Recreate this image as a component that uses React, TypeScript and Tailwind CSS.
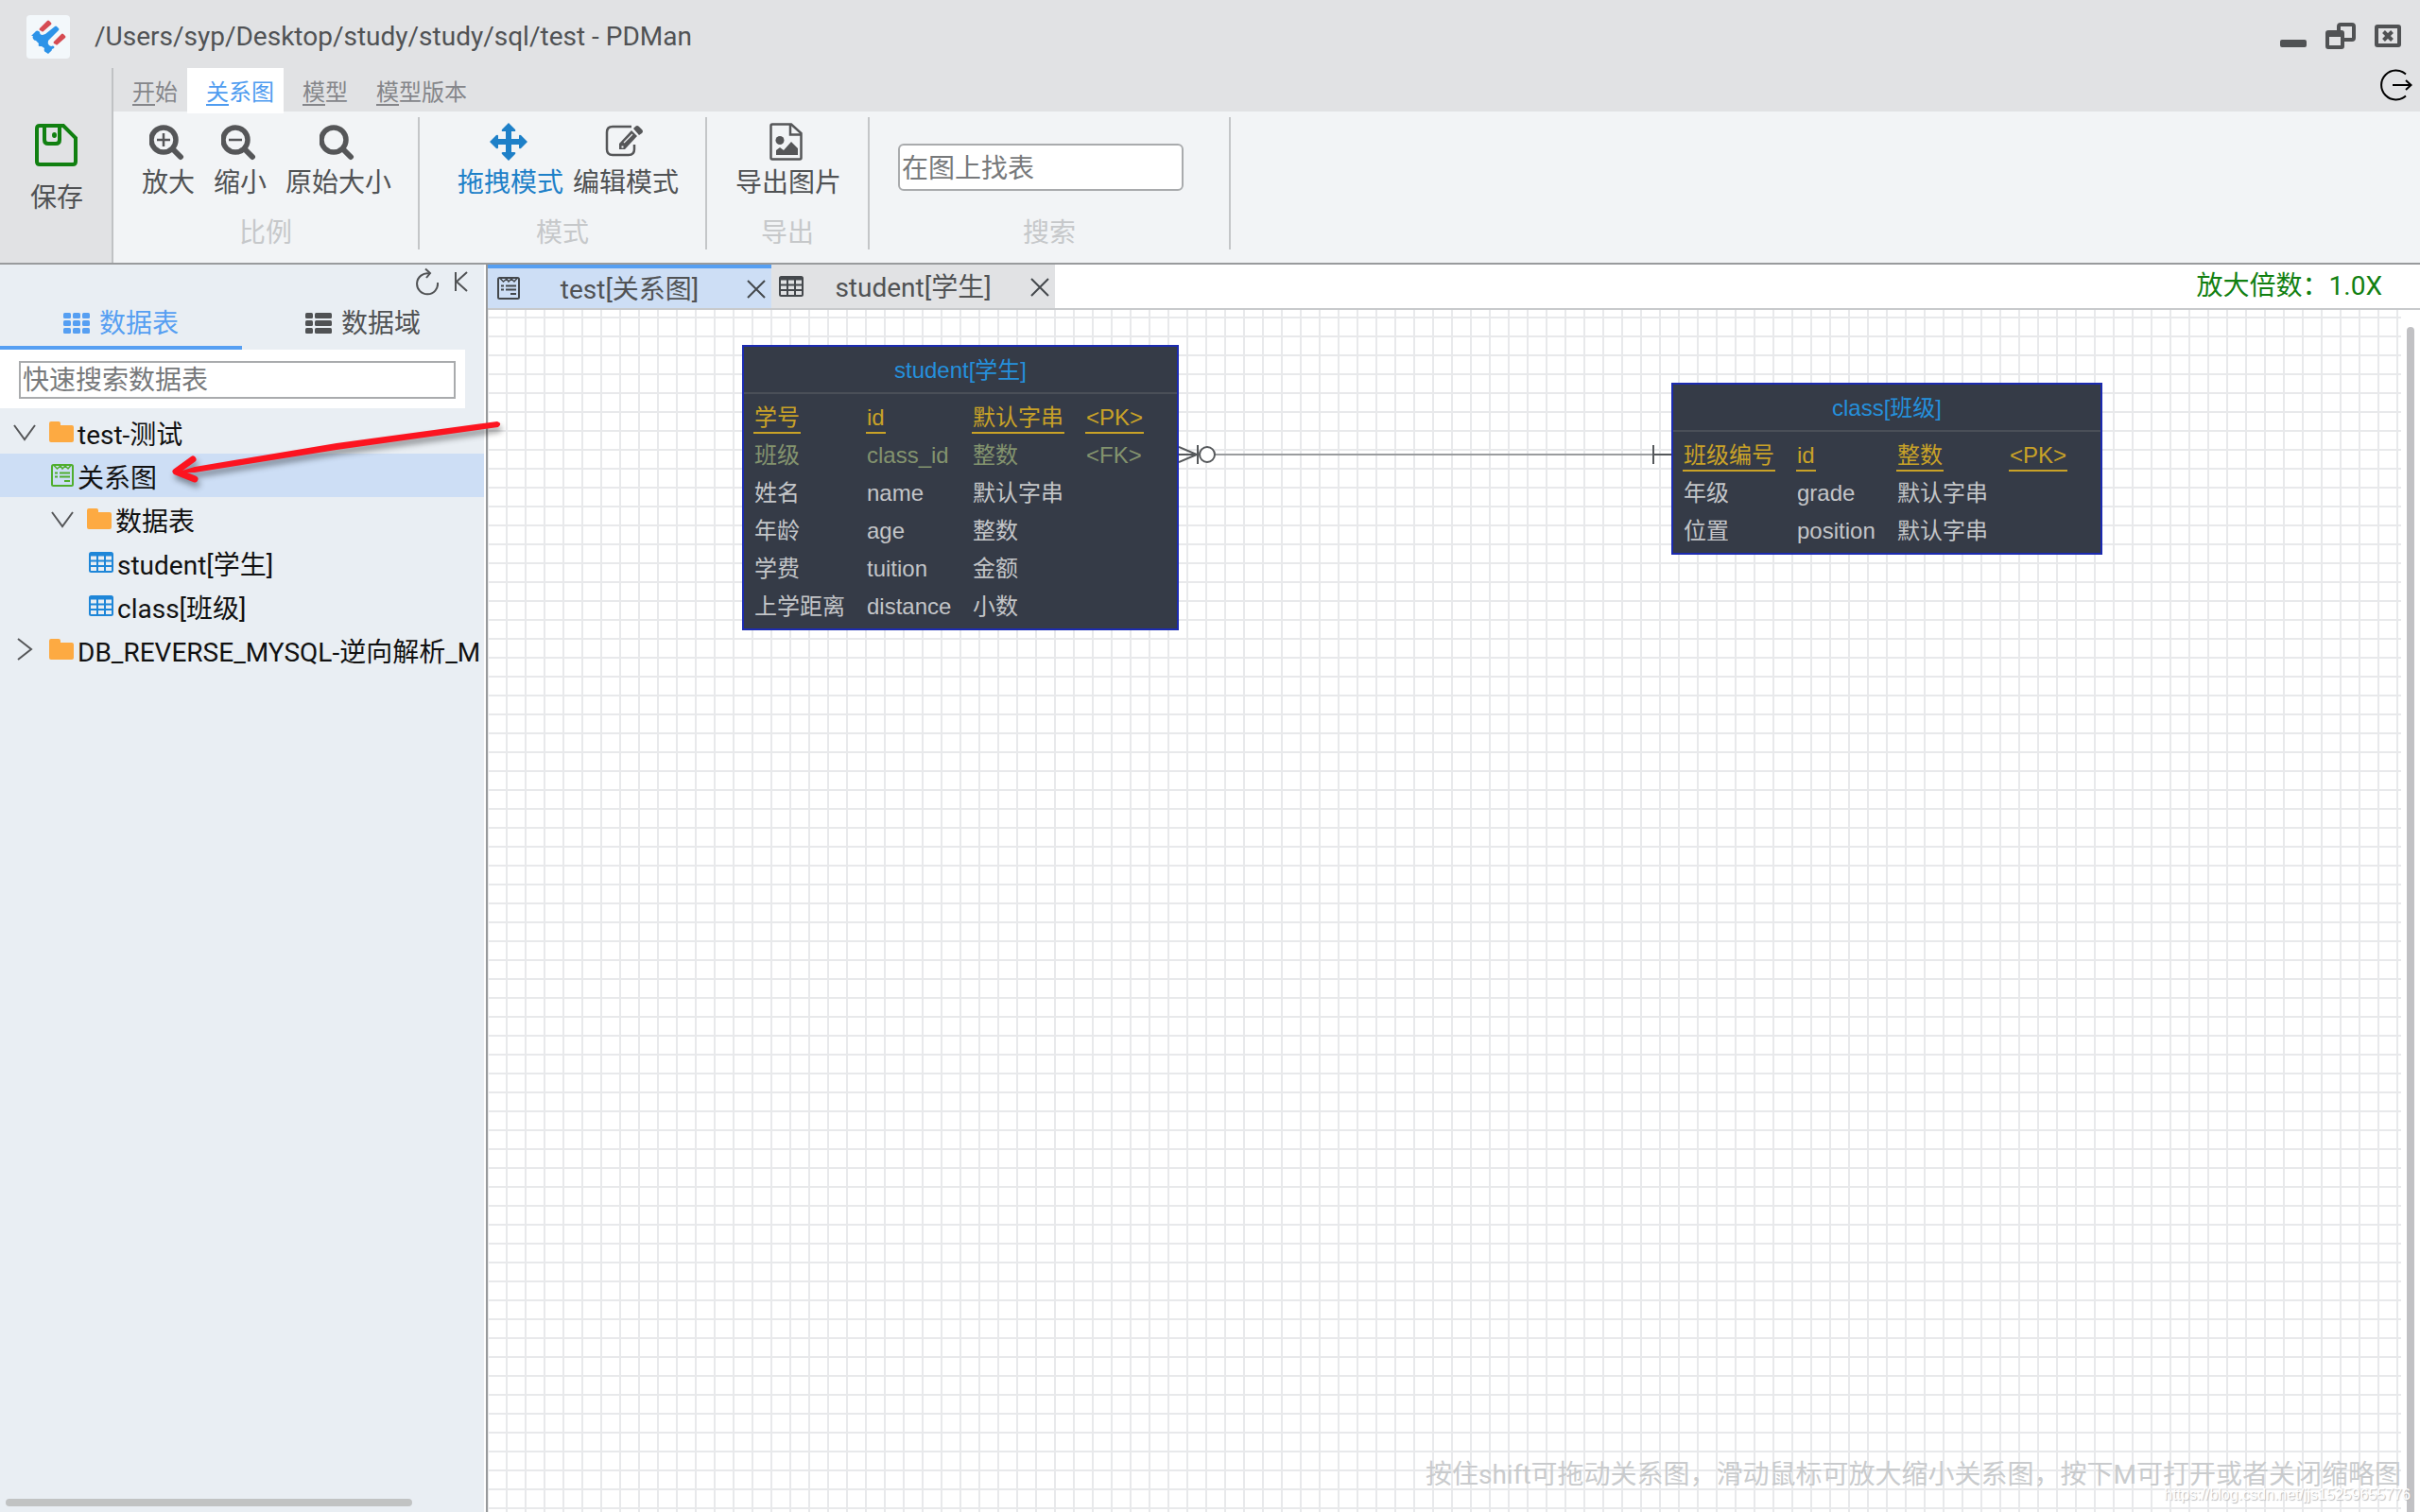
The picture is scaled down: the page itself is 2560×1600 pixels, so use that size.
import React from 'react';

type Cell = string;
type Row = { kind: 'pk' | 'fk' | 'plain'; cells: Cell[] };

const studentRows: Row[] = [
  { kind: 'pk', cells: ['学号', 'id', '默认字串', '<PK>'] },
  { kind: 'fk', cells: ['班级', 'class_id', '整数', '<FK>'] },
  { kind: 'plain', cells: ['姓名', 'name', '默认字串', ''] },
  { kind: 'plain', cells: ['年龄', 'age', '整数', ''] },
  { kind: 'plain', cells: ['学费', 'tuition', '金额', ''] },
  { kind: 'plain', cells: ['上学距离', 'distance', '小数', ''] },
];

const classRows: Row[] = [
  { kind: 'pk', cells: ['班级编号', 'id', '整数', '<PK>'] },
  { kind: 'plain', cells: ['年级', 'grade', '默认字串', ''] },
  { kind: 'plain', cells: ['位置', 'position', '默认字串', ''] },
];

const rowColor = {
  pk: 'text-[#c9a227]',
  fk: 'text-[#83936e]',
  plain: 'text-[#c3c5c8]',
};

function Logo() {
  return (
    <svg viewBox="0 0 46 46" className="h-[46px] w-[46px] shrink-0" aria-hidden="true">
      <rect width="46" height="46" rx="4" fill="#f3f8fb" />
      <path d="M14 14l8-8q1-1 2 0l2 2q1 1 0 2l-8 7q-1 1-2 0l-2-1q-1-1 0-2z" fill="#d64b52" />
      <path d="M29 28l8-8q1-1 2 0l2 2q1 1 0 2l-8 7q-1 1-2 0l-2-1q-1-1 0-2z" fill="#d64b52" />
      <path
        d="M5 22l5-5q1-1 3 0l1 1q0 3 3 3l3-1 10-8q1-1 2 0l2 2q1 1 0 2L23 27q-1 3 1 5l2 1q2-1 3 0 1 1 0 2l-2 1q0 2-2 3l-2 2-3-2q-2-1-1-4l-3-2h-2q-2 0-1-3l-3-3q-2 0-3-2-1-2 0-3z"
        fill="#2d93e8"
      />
    </svg>
  );
}

function SaveIcon() {
  return (
    <svg viewBox="0 0 46 46" className="ml-0.5 h-[46px] w-[46px]" fill="none" stroke="#118011" strokeWidth="4" aria-hidden="true">
      <path d="M5 3h25l13 13v25q0 3-3 3H5q-3 0-3-3V6q0-3 3-3z" />
      <path d="M10 3v15q0 4 4 4h8q4 0 4-4V3" />
      <ellipse cx="20.500" cy="13" rx="2.500" ry="3" fill="#118011" stroke="none" />
    </svg>
  );
}

function SearchIcon({ sign }: { sign?: 'plus' | 'minus' }) {
  return (
    <svg viewBox="0 0 40 40" className="h-10 w-10" fill="none" stroke="#555658" aria-hidden="true">
      <circle cx="15" cy="18" r="13" strokeWidth="5.500" />
      <path d="M25 28l8 8" strokeWidth="6" strokeLinecap="round" />
      {sign && <path d="M8 18h14" strokeWidth="2.500" />}
      {sign === 'plus' && <path d="M15 11v14" strokeWidth="2.500" />}
    </svg>
  );
}

function MoveIcon() {
  return (
    <svg viewBox="0 0 40 40" className="mr-1 h-10 w-10" fill="#1e80c8" aria-hidden="true">
      <path d="M20 0l7 7q1 2-1 2h-3v8h8v-3q0-2 2-1l7 7-7 7q-2 1-2-1v-3h-8v8h3q2 0 1 2l-7 7-7-7q-1-2 1-2h3v-8H9v3q0 2-2 1l-7-7 7-7q2-1 2 1v3h8V9h-3q-2 0-1-2z" />
    </svg>
  );
}

function EditIcon() {
  return (
    <svg viewBox="0 0 40 40" className="mr-1 h-10 w-10" aria-hidden="true">
      <path d="M28 4H8Q2 4 2 10v18q0 6 6 6h17q6 0 6-6v-5" fill="none" stroke="#555658" strokeWidth="2.500" />
      <path d="M28 8l6 6-13 14h-6v-6z" fill="#555658" />
      <path d="M30 6l2-2q2-2 4 0l3 3q2 2 0 4l-3 2z" fill="#555658" />
      <path d="M20 21l9-9" stroke="#f2f4f5" strokeWidth="1.200" />
      <path d="M17.500 22.500v2h2v2h-2z" fill="#f2f4f5" />
    </svg>
  );
}

function FileImageIcon() {
  return (
    <svg viewBox="0 0 40 40" className="mr-1 h-10 w-10" aria-hidden="true">
      <path d="M5 1.500h20L35.500 11v26q0 1.500-1.500 1.500H5q-1.500 0-1.500-1.500V3q0-1.500 1.500-1.500z" fill="none" stroke="#555658" strokeWidth="2.500" />
      <path d="M24 2v10.500h11" fill="none" stroke="#555658" strokeWidth="2.500" />
      <circle cx="13" cy="18.500" r="4.500" fill="#555658" />
      <path d="M9 34v-5l4-3 4 3 8-9 7 7v7z" fill="#555658" />
    </svg>
  );
}

function DiagramIcon({ color }: { color: string }) {
  return (
    <svg viewBox="0 0 24 24" className="h-6 w-6 shrink-0" fill="none" stroke={color} strokeWidth="2" aria-hidden="true">
      <rect x="1" y="1" width="22" height="22" rx="1.500" />
      <path d="M3 1.500l3.500 3.500L10 2l2 3 3-3 3 3 3-3.500" strokeWidth="1.500" />
      <path d="M4 9.500h3M9 9.500h11M4 13.500h3M9 13.500h11M14 18h6" />
    </svg>
  );
}

function TableIcon({ color }: { color: string }) {
  return (
    <svg viewBox="0 0 26 22" className="h-[22px] w-[26px] shrink-0" fill="none" stroke={color} strokeWidth="2" aria-hidden="true">
      <rect x="1" y="1" width="24" height="20" rx="1.500" />
      <path d="M1 3h24" strokeWidth="3" />
      <path d="M1 9.500h24M1 15h24M9 3v18M17 3v18" />
    </svg>
  );
}

function FolderIcon() {
  return (
    <svg viewBox="0 0 26 22" className="h-[22px] w-[26px] shrink-0" fill="#fdaa42" aria-hidden="true">
      <path d="M2 0h8q2 0 2 2v2h12q2 0 2 2v14q0 2-2 2H2q-2 0-2-2V2q0-2 2-2z" />
    </svg>
  );
}

function Chevron({ open }: { open: boolean }) {
  return (
    <svg viewBox="0 0 24 24" className="h-6 w-6 shrink-0" fill="none" stroke="#555658" strokeWidth="2" aria-hidden="true">
      {open ? <path d="M1 5l11 15L23 5" /> : <path d="M5 1l14 11L5 23" />}
    </svg>
  );
}

function CloseX() {
  return (
    <svg viewBox="0 0 20 20" className="mt-0.5 h-5 w-5" stroke="#44484c" strokeWidth="2" aria-hidden="true">
      <path d="M1 1l18 18M19 1L1 19" />
    </svg>
  );
}

function MenuTab({ first, rest, active }: { first: string; rest: string; active?: boolean }) {
  return (
    <button
      className={
        active
          ? 'relative z-10 -mb-0.5 bg-white pt-1 pr-2.5 pl-5 text-[#4f9cf0]'
          : 'pt-1.5 pr-2.5 pl-5 text-[#85868a]'
      }
    >
      <span className="underline decoration-2 underline-offset-4">{first}</span>
      {rest}
    </button>
  );
}

function Tool({ icon, label, active }: { icon: React.ReactNode; label: string; active?: boolean }) {
  return (
    <button className={active ? 'flex flex-col items-center text-[#1e80c8]' : 'flex flex-col items-center'}>
      {icon}
      <span className="leading-[48px]">{label}</span>
    </button>
  );
}

function Group({ label, className, children }: { label: string; className: string; children: React.ReactNode }) {
  return (
    <section className="flex h-[140px] flex-col border-r-2 border-[#c4c6c8]">
      <div className={`flex h-[100px] shrink-0 pt-1.5 ${className}`}>{children}</div>
      <div className="text-center leading-[46px] text-[#c6c8ca]">{label}</div>
    </section>
  );
}

function TreeRow({
  indent,
  selected,
  label,
  children,
}: {
  indent: string;
  selected?: boolean;
  label: string;
  children: React.ReactNode;
}) {
  return (
    <li
      className={`flex h-[46px] items-center overflow-hidden whitespace-nowrap text-[#111] ${indent} ${
        selected ? 'bg-[#cddef5]' : ''
      }`}
    >
      {children}
      <span className="ml-1 pt-2">{label}</span>
    </li>
  );
}

function Entity({ title, rows, widths, className }: { title: string; rows: Row[]; widths: string[]; className: string }) {
  return (
    <div
      className={`absolute border-2 border-[#1c2bb0] bg-[#353b47] pb-[3px] font-['Liberation_Sans','Noto_Sans_CJK_SC',sans-serif] text-2xl ${className}`}
    >
      <h2 className="h-[50px] border-b-2 border-[#4a4f58] text-center leading-[50px] text-[#2590dc]">{title}</h2>
      <table className="mt-[5px] ml-2.5 table-fixed border-collapse whitespace-nowrap">
        <tbody>
          {rows.map((r) => (
            <tr key={r.cells[1]} className={`h-10 ${rowColor[r.kind]}`}>
              {r.cells.map((c, i) => (
                <td key={i} className={`p-0 align-top ${widths[i]}`}>
                  {c && (
                    <span
                      className={
                        r.kind === 'pk'
                          ? 'inline-block h-[37px] border-b-2 border-[#c9a227] px-px leading-10'
                          : 'inline-block px-px leading-10'
                      }
                    >
                      {c}
                    </span>
                  )}
                </td>
              ))}
            </tr>
          ))}
        </tbody>
      </table>
    </div>
  );
}

function Relation() {
  return (
    <svg viewBox="0 0 521 24" className="absolute top-[141px] left-[731px] h-6 w-[521px]" fill="none" stroke="#55585b" strokeWidth="2" aria-hidden="true">
      <path d="M38 12h465" stroke="#9a9c9e" />
      <path d="M0 4l19 8L0 20M0 12h19" />
      <path d="M20 2v20" />
      <circle cx="30" cy="12" r="8" fill="#fff" />
      <path d="M502 2v20M502 12h19" />
    </svg>
  );
}

function Pointer() {
  return (
    <svg
      viewBox="0 0 360 80"
      className="pointer-events-none absolute top-[440px] left-[176px] z-20 h-20 w-[360px] drop-shadow-[2px_5px_3px_rgba(0,0,0,0.4)]"
      aria-hidden="true"
    >
      <path d="M10 60L30 60L180 36L351 12Q356 8 350 6L180 29L30 54z" fill="#fc1420" />
      <path d="M28 46L10 59L30 67" fill="none" stroke="#fc1420" strokeWidth="7" strokeLinecap="round" strokeLinejoin="round" />
    </svg>
  );
}

export default function App() {
  return (
    <div className="relative flex min-h-screen flex-col bg-white font-['Roboto','Noto_Sans_CJK_SC',sans-serif] text-[28px] text-[#505254]">
      <header className="flex h-[72px] items-center bg-[#e1e2e4] pt-1.5 pr-5 pl-7">
        <Logo />
        <h1 className="ml-[26px] flex-1">/Users/syp/Desktop/study/study/sql/test - PDMan</h1>
        <div className="flex items-center gap-5">
          <button aria-label="最小化">
            <svg viewBox="0 0 28 32" className="h-8 w-7" fill="#505254" aria-hidden="true">
              <rect y="19" width="28" height="8" rx="2" />
            </svg>
          </button>
          <button aria-label="还原">
            <svg viewBox="0 0 32 32" className="h-8 w-8" fill="none" stroke="#505254" strokeWidth="4" aria-hidden="true">
              <path d="M14 9V5q0-2 2-2h12q2 0 2 2v12q0 2-2 2h-8" />
              <rect x="2" y="11" width="16" height="16" rx="1" />
              <path d="M2 14h16" />
            </svg>
          </button>
          <button aria-label="关闭">
            <svg viewBox="0 0 28 32" className="h-8 w-7" fill="none" stroke="#505254" strokeWidth="4" aria-hidden="true">
              <rect x="2" y="5" width="24" height="20" rx="1" />
              <path d="M9.500 10.500l9 9M18.500 10.500l-9 9" />
            </svg>
          </button>
        </div>
      </header>

      <div className="flex border-b-2 border-[#999b9d] bg-[#e1e2e4]">
        <button className="flex h-[206px] w-[120px] flex-col items-center border-r-2 border-[#c0c2c4] pt-[58px]">
          <SaveIcon />
          <span className="mt-3 ml-0.5 leading-[44px]">保存</span>
        </button>
        <div className="flex flex-1 flex-col">
          <nav className="flex h-[46px] text-2xl">
            <MenuTab first="开" rest="始" />
            <MenuTab first="关" rest="系图" active />
            <MenuTab first="模" rest="型" />
            <MenuTab first="模" rest="型版本" />
            <button aria-label="退出" className="mr-2 ml-auto flex items-start">
              <svg viewBox="0 0 34 34" className="mt-px h-[34px] w-[34px]" fill="none" stroke="#000" strokeWidth="2" aria-hidden="true">
                <path d="M27 5.500A15.500 15.500 0 1 0 27 28.500" />
                <path d="M13 17h19M27 12l5.500 5-5.500 5" />
              </svg>
            </button>
          </nav>
          <div className="flex flex-1 bg-[#f2f4f6] pt-1.5">
            <Group label="比例" className="gap-5 px-7.5 pr-7">
              <Tool icon={<SearchIcon sign="plus" />} label="放大" />
              <Tool icon={<SearchIcon sign="minus" />} label="缩小" />
              <Tool icon={<SearchIcon />} label="原始大小" />
            </Group>
            <Group label="模式" className="gap-2.5 pr-7 pl-10">
              <Tool icon={<MoveIcon />} label="拖拽模式" active />
              <Tool icon={<EditIcon />} label="编辑模式" />
            </Group>
            <Group label="导出" className="pr-7 pl-7.5">
              <Tool icon={<FileImageIcon />} label="导出图片" />
            </Group>
            <Group label="搜索" className="items-center pr-12 pl-7.5">
              <input
                aria-label="在图上找表"
                placeholder="在图上找表"
                className="h-[50px] w-[302px] rounded-md border-2 border-[#a9abad] bg-white px-0.5 pt-0.5 placeholder:text-[#77797b]"
              />
            </Group>
          </div>
        </div>
      </div>

      <div className="flex flex-1">
        <aside className="flex w-[516px] shrink-0 flex-col border-r-2 border-[#97999b] bg-white pr-0.5">
          <div className="flex flex-1 flex-col bg-[#e9eef3]">
            <div className="flex h-9 items-center justify-end gap-4 pr-4">
              <button aria-label="刷新">
                <svg viewBox="0 0 24 30" className="h-[30px] w-6" fill="none" stroke="#505254" strokeWidth="2" aria-hidden="true">
                  <path d="M14 6.500A11 11 0 1 0 23 16" />
                  <path d="M10 1.500l5 4.500-4 5" />
                </svg>
              </button>
              <button aria-label="收起">
                <svg viewBox="0 0 16 22" className="h-[22px] w-4" fill="none" stroke="#505254" strokeWidth="2" aria-hidden="true">
                  <path d="M2 1v20M14 1L3 11l11 10" />
                </svg>
              </button>
            </div>
            <div className="flex h-[54px]">
              <button className="flex flex-1 items-center justify-center gap-2.5 border-b-4 border-[#569ff2] pt-0.5 text-[#569ff2]">
                <svg viewBox="0 0 28 22" className="h-[22px] w-7" fill="currentColor" aria-hidden="true">
                  {[0, 8, 16].map((y) =>
                    [0, 10, 20].map((x) => <rect key={`${x}-${y}`} x={x} y={y} width="8" height="6" rx="1.500" />),
                  )}
                </svg>
                <span className="pt-0.5">数据表</span>
              </button>
              <button className="flex flex-1 items-center justify-center gap-2.5 border-b-4 border-transparent pt-0.5">
                <svg viewBox="0 0 28 22" className="h-[22px] w-7" fill="currentColor" aria-hidden="true">
                  {[0, 8, 16].map((y) => (
                    <g key={y}>
                      <rect y={y} width="8" height="6" rx="1.500" />
                      <rect x="10" y={y} width="18" height="6" rx="1.500" />
                    </g>
                  ))}
                </svg>
                <span className="pt-0.5">数据域</span>
              </button>
            </div>
            <div className="mr-5 flex h-[62px] items-center bg-white pt-0.5 pr-2.5 pl-5">
              <input
                aria-label="快速搜索数据表"
                placeholder="快速搜索数据表"
                className="h-10 w-full border-2 border-[#a9abad] bg-white px-0.5 pt-0.5 placeholder:text-[#77797b]"
              />
            </div>
            <ul className="mt-0.5">
              <TreeRow indent="pl-3.5" label="test-测试">
                <Chevron open />
                <span className="w-3.5" />
                <FolderIcon />
              </TreeRow>
              <TreeRow indent="pl-[54px]" label="关系图" selected>
                <DiagramIcon color="#4fae2e" />
              </TreeRow>
              <TreeRow indent="pl-[54px]" label="数据表">
                <Chevron open />
                <span className="w-3.5" />
                <FolderIcon />
              </TreeRow>
              <TreeRow indent="pl-[94px]" label="student[学生]">
                <TableIcon color="#1e86d8" />
              </TreeRow>
              <TreeRow indent="pl-[94px]" label="class[班级]">
                <TableIcon color="#1e86d8" />
              </TreeRow>
              <TreeRow indent="pl-3.5" label="DB_REVERSE_MYSQL-逆向解析_M">
                <Chevron open={false} />
                <span className="w-3.5 shrink-0" />
                <FolderIcon />
              </TreeRow>
            </ul>
            <div className="mt-auto mb-1.5 ml-1.5 h-2 w-[430px] rounded-full bg-[#c1c3c3]" />
          </div>
        </aside>

        <main className="flex flex-1 flex-col">
          <div className="flex h-12 border-b-2 border-[#c8cacc]">
            <div className="flex w-[300px] items-center border-t-4 border-[#569ff2] bg-[#cddef5] pr-1.5 pl-2.5">
              <DiagramIcon color="#44484c" />
              <button className="flex-1 pt-1 pr-2 text-center">test[关系图]</button>
              <button aria-label="关闭 test">
                <CloseX />
              </button>
            </div>
            <div className="flex w-[300px] items-center bg-[#e1e2e4] pr-1.5 pl-2">
              <TableIcon color="#44484c" />
              <button className="flex-1 pt-1 pr-2 text-center">student[学生]</button>
              <button aria-label="关闭 student">
                <CloseX />
              </button>
            </div>
            <div className="mr-10 ml-auto leading-[46px] text-[#118011]">放大倍数：1.0X</div>
          </div>
          <div className="flex flex-1">
            <div className="relative flex-1 bg-[linear-gradient(to_right,#e8e9eb_2px,transparent_2px),linear-gradient(to_bottom,#e8e9eb_2px,transparent_2px)] bg-[length:20px_20px] bg-[position:19px_7px]">
              <Relation />
              <Entity
                title="student[学生]"
                rows={studentRows}
                widths={['w-[119px]', 'w-[112px]', 'w-[120px]', 'w-[90px]']}
                className="top-[37px] left-[269px] w-[462px]"
              />
              <Entity
                title="class[班级]"
                rows={classRows}
                widths={['w-[120px]', 'w-[106px]', 'w-[119px]', 'w-[90px]']}
                className="top-[77px] left-[1252px] w-[456px]"
              />
              <p className="absolute right-0 bottom-[18px] leading-[42px] whitespace-nowrap text-[#c9cbcd]">
                按住shift可拖动关系图，滑动鼠标可放大缩小关系图，按下M可打开或者关闭缩略图
              </p>
              <p className="absolute -right-2.5 bottom-1 z-10 font-['Liberation_Sans',sans-serif] text-[16px] leading-7 whitespace-nowrap text-white [text-shadow:1px_1px_1px_#b8babc]">
                https://blog.csdn.net/jjs15259655776
              </p>
            </div>
            <div className="flex w-5 flex-col pt-[18px] pl-1.5">
              <div className="w-2 flex-1 rounded-t-full bg-[#c1c1c4]" />
            </div>
          </div>
        </main>
      </div>
      <Pointer />
    </div>
  );
}
